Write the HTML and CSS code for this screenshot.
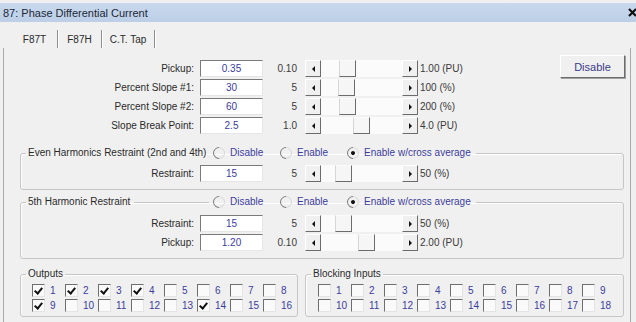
FILE: index.html
```html
<!DOCTYPE html>
<html lang="en">
<head>
    <meta charset="UTF-8">
    <title>87: Phase Differential Current</title>
    <link rel="stylesheet" href="styles.css">
</head>
<body>
    <div class="titlebar">
        <span>87: Phase Differential Current</span>
        <svg class="close" width="9" height="9" viewBox="0 0 9 9"><path d="M1 1L8 8M8 1L1 8" stroke="#111" stroke-width="2.2"/></svg>
    </div>

    <div class="tabs">
        <div class="tab tab-1">F87T</div>
        <div class="tab tab-2">F87H</div>
        <div class="tab tab-3">C.T. Tap</div>
    </div>

    <div class="panel">
        <div class="top">
            <div class="rows">
                <div class="row">
                    <span class="label">Pickup:</span>
                    <span class="input">0.35</span>
                    <span class="min">0.10</span>
                    <span class="scroll"><span class="sbtn left"></span><span class="track"><span class="thumb" style="margin-left:18px"></span></span><span class="sbtn right"></span></span>
                    <span class="max">1.00 (PU)</span>
                </div>
                <div class="row">
                    <span class="label">Percent Slope #1:</span>
                    <span class="input">30</span>
                    <span class="min">5</span>
                    <span class="scroll"><span class="sbtn left"></span><span class="track"><span class="thumb" style="margin-left:17px"></span></span><span class="sbtn right"></span></span>
                    <span class="max">100 (%)</span>
                </div>
                <div class="row">
                    <span class="label">Percent Slope #2:</span>
                    <span class="input">60</span>
                    <span class="min">5</span>
                    <span class="scroll"><span class="sbtn left"></span><span class="track"><span class="thumb" style="margin-left:18px"></span></span><span class="sbtn right"></span></span>
                    <span class="max">200 (%)</span>
                </div>
                <div class="row">
                    <span class="label">Slope Break Point:</span>
                    <span class="input">2.5</span>
                    <span class="min">1.0</span>
                    <span class="scroll"><span class="sbtn left"></span><span class="track"><span class="thumb" style="margin-left:32px"></span></span><span class="sbtn right"></span></span>
                    <span class="max">4.0 (PU)</span>
                </div>
            </div>
            <button class="btn">Disable</button>
        </div>

        <fieldset class="group group-even">
            <legend>
                <span class="legend-text">Even Harmonics Restraint (2nd and 4th)</span>
                <span class="filler"></span>
                <span class="radios">
                    <span class="radio r-1"><span class="dot"></span>Disable</span>
                    <span class="radio r-2"><span class="dot"></span>Enable</span>
                    <span class="radio r-3"><span class="dot on"></span>Enable w/cross average</span>
                </span>
            </legend>
            <div class="row">
                <span class="label">Restraint:</span>
                <span class="input">15</span>
                <span class="min">5</span>
                <span class="scroll"><span class="sbtn left"></span><span class="track"><span class="thumb" style="margin-left:14px"></span></span><span class="sbtn right"></span></span>
                <span class="max">50 (%)</span>
            </div>
        </fieldset>

        <fieldset class="group group-fifth">
            <legend>
                <span class="legend-text">5th Harmonic Restraint</span>
                <span class="filler line"></span>
                <span class="radios">
                    <span class="radio r-1"><span class="dot"></span>Disable</span>
                    <span class="radio r-2"><span class="dot"></span>Enable</span>
                    <span class="radio r-3"><span class="dot on"></span>Enable w/cross average</span>
                </span>
            </legend>
            <div class="row">
                <span class="label">Restraint:</span>
                <span class="input">15</span>
                <span class="min">5</span>
                <span class="scroll"><span class="sbtn left"></span><span class="track"><span class="thumb" style="margin-left:14px"></span></span><span class="sbtn right"></span></span>
                <span class="max">50 (%)</span>
            </div>
            <div class="row">
                <span class="label">Pickup:</span>
                <span class="input">1.20</span>
                <span class="min">0.10</span>
                <span class="scroll"><span class="sbtn left"></span><span class="track"><span class="thumb" style="margin-left:37px"></span></span><span class="sbtn right"></span></span>
                <span class="max">2.00 (PU)</span>
            </div>
        </fieldset>

        <div class="bottom">
            <fieldset class="group outputs">
                <legend><span class="legend-text">Outputs</span></legend>
                <div class="checks cols-8">
                    <span class="check"><span class="box on"></span>1</span>
                    <span class="check"><span class="box on"></span>2</span>
                    <span class="check"><span class="box on"></span>3</span>
                    <span class="check"><span class="box on"></span>4</span>
                    <span class="check"><span class="box"></span>5</span>
                    <span class="check"><span class="box"></span>6</span>
                    <span class="check"><span class="box"></span>7</span>
                    <span class="check"><span class="box"></span>8</span>
                    <span class="check"><span class="box on"></span>9</span>
                    <span class="check"><span class="box"></span>10</span>
                    <span class="check"><span class="box"></span>11</span>
                    <span class="check"><span class="box"></span>12</span>
                    <span class="check"><span class="box"></span>13</span>
                    <span class="check"><span class="box on"></span>14</span>
                    <span class="check"><span class="box"></span>15</span>
                    <span class="check"><span class="box"></span>16</span>
                </div>
            </fieldset>
            <fieldset class="group blocking">
                <legend><span class="legend-text">Blocking Inputs</span></legend>
                <div class="checks cols-9">
                    <span class="check"><span class="box"></span>1</span>
                    <span class="check"><span class="box"></span>2</span>
                    <span class="check"><span class="box"></span>3</span>
                    <span class="check"><span class="box"></span>4</span>
                    <span class="check"><span class="box"></span>5</span>
                    <span class="check"><span class="box"></span>6</span>
                    <span class="check"><span class="box"></span>7</span>
                    <span class="check"><span class="box"></span>8</span>
                    <span class="check"><span class="box"></span>9</span>
                    <span class="check"><span class="box"></span>10</span>
                    <span class="check"><span class="box"></span>11</span>
                    <span class="check"><span class="box"></span>12</span>
                    <span class="check"><span class="box"></span>13</span>
                    <span class="check"><span class="box"></span>14</span>
                    <span class="check"><span class="box"></span>15</span>
                    <span class="check"><span class="box"></span>16</span>
                    <span class="check"><span class="box"></span>17</span>
                    <span class="check"><span class="box"></span>18</span>
                </div>
            </fieldset>
        </div>
    </div>
</body>
</html>
```

FILE: styles.css
```css
body {
    margin: 0;
    width: 636px;
    height: 322px;
    overflow: hidden;
    background: #f0f0f0;
    font-family: "Liberation Sans", Arial, sans-serif;
    font-size: 10px;
    color: #2a2a2a;
    white-space: nowrap;
}

/* window chrome */
.titlebar {
    height: 19px;
    margin-top: 3px;
    padding: 0 0 0 3px;
    display: flex;
    align-items: center;
    justify-content: space-between;
    background: linear-gradient(#c9d9ee, #bccfe7);
    color: #1c2836;
    font-size: 11px;
}
.close { margin-right: -1px; }

.tabs {
    height: 26px;
    display: flex;
    align-items: flex-end;
    padding-left: 12px;
}
.tab {
    height: 18px;
    display: flex;
    align-items: center;
    justify-content: center;
    border-right: 1px solid #8e8e8e;
    box-shadow: 1px 0 0 #fff;
}
.tab-1 { width: 45px; }
.tab-2 { width: 43px; }
.tab-3 { width: 52px; }

.panel {
    margin: 0 5px 0 3px;
    height: 274px;
    border-left: 1px solid #a9a9a9;
    border-right: 1px solid #a9a9a9;
}

/* slider rows */
.top {
    display: flex;
    padding-top: 7px;
}
.rows {
    display: flex;
    flex-direction: column;
    gap: 2px;
    margin-top: 5px;
}
.row {
    --label-w: 196px;
    display: grid;
    grid-template-columns: var(--label-w) 63px 42px 113px auto;
    align-items: center;
    height: 17px;
}
.group .row { --label-w: 179px; }
.group .row + .row { margin-top: 2px; }

.label {
    text-align: right;
    padding-right: 6px;
}
.input {
    height: 17px;
    box-sizing: border-box;
    background: #fff;
    border: 1px solid;
    border-color: #7a7a7a #e6e6e6 #e6e6e6 #7a7a7a;
    color: #3c3c9c;
    text-align: center;
    line-height: 15px;
}
.min {
    text-align: right;
    padding-right: 8px;
    color: #3a3a3a;
}
.max {
    padding-left: 2px;
    color: #3a3a3a;
}

.scroll {
    display: flex;
    height: 17px;
}
.sbtn {
    width: 16px;
    box-sizing: border-box;
    border: 1px solid;
    border-color: #fff #6c6c6c #6c6c6c #fff;
    background: #f0f0f0;
    display: flex;
    align-items: center;
    justify-content: center;
}
.sbtn::before {
    content: "";
    border-top: 3px solid transparent;
    border-bottom: 3px solid transparent;
}
.sbtn.left::before { border-right: 3px solid #111; }
.sbtn.right::before { border-left: 3px solid #111; }
.track {
    flex: 1;
    display: flex;
    background: #fbfbfb;
}
.thumb {
    width: 17px;
    box-sizing: border-box;
    border: 1px solid;
    border-color: #fbfbfb #6c6c6c #6c6c6c #d6d6d6;
    background: #f6f6f6;
}

.btn {
    width: 65px;
    height: 23px;
    margin: 0 5px 0 auto;
    padding: 0;
    font: inherit;
    font-size: 11px;
    color: #3a3a8a;
    background: #f0f0f0;
    border: 1px solid;
    border-color: #fff #6c6c6c #6c6c6c #fff;
    box-shadow: 1px 1px 0 #a0a0a0;
}

/* group boxes */
.group {
    margin: 0 6px 0 16px;
    padding: 0 0 7px;
    border: 1px solid #c6c6c6;
    border-radius: 3px;
    box-shadow: inset 1px 1px 0 #fff;
}
.group legend {
    margin-left: 5px;
    padding: 0 2px;
    height: 14px;
    line-height: 14px;
    display: flex;
    align-items: center;
}
.group-even { margin-top: 12px; }
.group-even .row { margin-top: 5px; }
.group-fifth { margin-top: 5px; }
.group-fifth .row:first-of-type { margin-top: 6px; }
.group-even legend,
.group-fifth legend { width: 446px; }

.filler { flex: 1; min-width: 0; }
.filler.line {
    height: 1px;
    margin: 0 4px;
    background: #c6c6c6;
}
.radios {
    width: 261px;
    flex-shrink: 0;
    display: flex;
    color: #3c3c9c;
}
.radio {
    display: flex;
    align-items: center;
    gap: 5px;
}
.r-1 { width: 67px; }
.r-2 { width: 67px; }
.dot {
    width: 12px;
    height: 12px;
    box-sizing: border-box;
    border-radius: 50%;
    border: 1px solid;
    border-color: #7c7c7c #d8d8d8 #d8d8d8 #7c7c7c;
    transform: rotate(-45deg);
    display: flex;
    align-items: center;
    justify-content: center;
}
.dot.on::after {
    content: "";
    width: 4px;
    height: 4px;
    border-radius: 50%;
    background: #111;
}

/* checkbox groups */
.bottom {
    display: flex;
    margin: 8px 6px 0 16px;
    gap: 7px;
}
.bottom .group {
    margin: 0;
    padding-bottom: 3px;
}
.outputs { width: 278px; box-sizing: border-box; }
.blocking { flex: 1; }
.checks {
    display: grid;
    padding-top: 2px;
    color: #3c3c9c;
}
.cols-8 { grid-template-columns: repeat(8, 33px); padding-left: 11px; }
.cols-9 { grid-template-columns: repeat(9, 33px); padding-left: 12px; }
.check {
    height: 15px;
    display: flex;
    align-items: center;
    gap: 5px;
}
.box {
    width: 13px;
    height: 13px;
    box-sizing: border-box;
    border: 1px solid;
    border-color: #6e6e6e #e4e4e4 #e4e4e4 #6e6e6e;
    background: #fafafa;
    position: relative;
}
.box.on::after {
    content: "";
    position: absolute;
    left: 3px;
    top: 1px;
    width: 3px;
    height: 6px;
    border: solid #111;
    border-width: 0 2px 2px 0;
    transform: rotate(40deg);
}
```
